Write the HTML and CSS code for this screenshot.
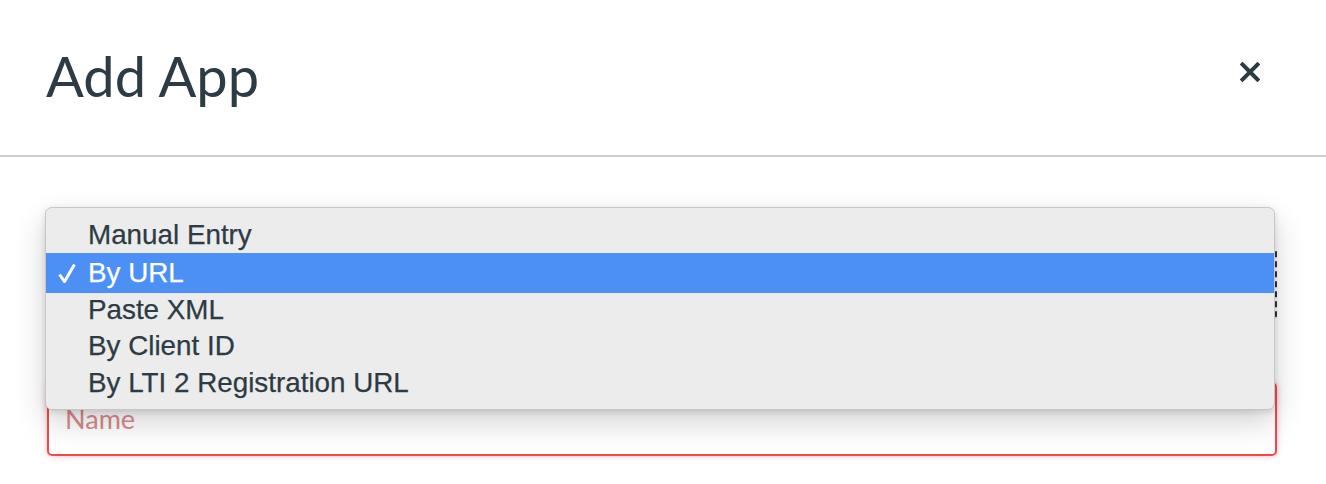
FILE: index.html
```html
<!DOCTYPE html>
<html lang="en">
<head>
<meta charset="utf-8">
<title>Add App</title>
<link rel="stylesheet" href="styles.css">
</head>
<body>
<div class="modal">
  <header class="modal-header">
    <h1 class="modal-title">Add App</h1>
    <button class="close-btn" aria-label="Close">
      <svg width="20" height="20" viewBox="0 0 20 20"><path d="M2.5 2.5 L17.5 17.5 M17.5 2.5 L2.5 17.5" stroke="#2d3b45" stroke-width="4" stroke-linecap="square" fill="none"/></svg>
    </button>
  </header>
  <div class="modal-body">
    <div class="select-box"></div>
    <div class="name-input"><span class="placeholder">Name</span></div>
    <ul class="menu">
      <li class="menu-item r1">Manual Entry</li>
      <li class="menu-item r2 selected"><svg class="check" width="18" height="20" viewBox="0 0 18 20"><path d="M1.5 11.5 L6.5 18.5 L16.5 1.5" stroke="#ffffff" stroke-width="3" stroke-linejoin="miter" fill="none"/></svg>By URL</li>
      <li class="menu-item r3">Paste XML</li>
      <li class="menu-item r4">By Client ID</li>
      <li class="menu-item r5">By LTI 2 Registration URL</li>
    </ul>
  </div>
</div>
</body>
</html>
```

FILE: styles.css
```css
html, body {
  margin: 0;
  padding: 0;
  background: #ffffff;
}
.modal {
  position: relative;
  width: 1326px;
  height: 484px;
  overflow: hidden;
  font-family: Lato, "Liberation Sans", sans-serif;
  color: #2d3b45;
}
.modal-header {
  display: flex;
  align-items: flex-start;
  justify-content: space-between;
  padding: 42px 66px 46px 46px;
  border-bottom: 2px solid #c7cdd1;
}
.modal-title {
  margin: 0;
  font-size: 56px;
  line-height: 67px;
  font-weight: 400;
  color: #2d3b45;
}
.close-btn {
  margin-top: 20px;
  padding: 0;
  border: 0;
  background: none;
  width: 20px;
  height: 20px;
  display: flex;
}
.modal-body {
  position: relative;
  padding: 90px 49px 0 47px;
  display: flex;
  flex-direction: column;
  gap: 63px;
}
.select-box {
  height: 72px;
  box-sizing: border-box;
  border: 1px solid #c7cdd1;
  border-right: 2px dashed #333;
  border-radius: 4px;
}
.name-input {
  height: 74px;
  box-sizing: border-box;
  border: 2px solid #f04a4f;
  border-radius: 5px;
  box-shadow: 0 0 6px rgba(240, 60, 70, 0.35);
  padding: 0 0 0 16px;
  display: flex;
  align-items: center;
}
.placeholder {
  font-size: 27px;
  color: #d98a8d;
  margin-top: -2px;
}
.menu {
  position: absolute;
  left: 45px;
  top: 50px;
  width: 1230px;
  height: 203px;
  box-sizing: border-box;
  margin: 0;
  padding: 8px 0 0 0;
  list-style: none;
  background: #ececec;
  border: 1px solid #c6c6c6;
  border-radius: 7px;
  box-shadow: 0 12px 30px rgba(0, 0, 0, 0.18), 0 2px 6px rgba(0, 0, 0, 0.12);
  font-family: "Liberation Sans", Arial, sans-serif;
  font-size: 27.8px;
  color: #2d3b45;
  -webkit-text-stroke: 0.25px currentColor;
}
.menu-item {
  position: relative;
  display: flex;
  align-items: center;
  padding-left: 42px;
  height: 37px;
}
.menu-item.r2 { height: 40px; }
.menu-item.r3 { height: 34px; }
.menu-item.selected {
  background: #4c8ff5;
  color: #ffffff;
}
.check {
  position: absolute;
  left: 12px;
  top: 10px;
}
```
